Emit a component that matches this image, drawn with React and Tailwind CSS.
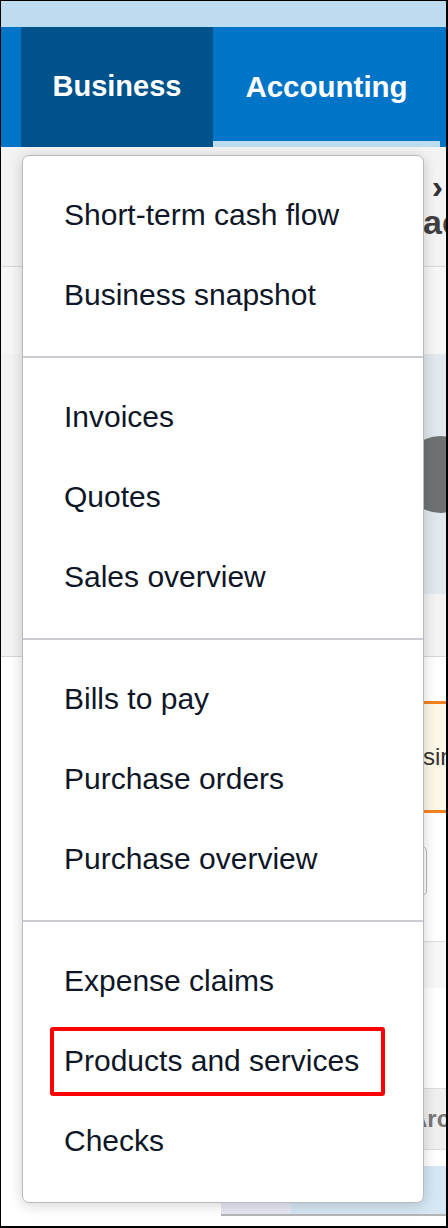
import React from 'react';

const sections = [
  ['Short-term cash flow', 'Business snapshot'],
  ['Invoices', 'Quotes', 'Sales overview'],
  ['Bills to pay', 'Purchase orders', 'Purchase overview'],
  ['Expense claims', 'Products and services', 'Checks'],
];

const MenuItem = ({ label, highlighted }) => (
  <div className="relative h-[80px] flex items-center pl-[41px] text-[30px] text-[#0e1627] whitespace-nowrap">
    {label}
    {highlighted && (
      <div className="absolute left-[27px] top-[7px] w-[335px] h-[69px] border-4 border-[#ff0000] rounded-[3px]" />
    )}
  </div>
);

const BusinessMenu = () => (
  <div className="absolute left-[21px] top-[154px] w-[402px] bg-white border-[1.5px] border-[#b9b9c1] rounded-[7px] shadow-[0_2px_14px_rgba(0,0,0,0.18)]">
    {sections.map((items, i) => (
      <div key={i} className={i > 0 ? 'border-t-2 border-[#cbcbd1]' : ''}>
        <div className="pt-[18px] pb-[22px]">
          {items.map((label) => (
            <MenuItem
              key={label}
              label={label}
              highlighted={label === 'Products and services'}
            />
          ))}
        </div>
      </div>
    ))}
  </div>
);

export default function App() {
  return (
    <div
      className="relative w-[448px] h-[1228px] overflow-hidden bg-white border-l border-t border-r-2 border-b-2 border-black"
      style={{ fontFamily: '"Liberation Sans", Arial, sans-serif' }}
    >
      {/* top strip + nav */}
      <div className="h-[26px] bg-[#bedcf0]" />
      <div className="h-[120px] bg-[#0075c8] flex pl-[20px] text-white font-bold text-[29px]">
        <div className="w-[192px] bg-[#00528b] flex items-center justify-center">
          Business
        </div>
        <div className="relative w-[227px] flex items-center justify-center text-[29.5px]">
          Accounting
          <div className="absolute left-0 right-0 bottom-0 h-[6px] bg-[#bedcf0]" />
        </div>
      </div>

      {/* page behind the menu */}
      <div className="bg-[#f3f3f3] border-b border-[#d6d6d6]">
        <div className="h-[120px] border-b border-[#d6d6d6] overflow-hidden">
          <div className="flex justify-end items-center h-[50px] pt-[28px] pr-[3px] text-[#333] leading-none">
            <span className="text-[18px] text-[#0075c8]">Dashboard</span>
            <span className="ml-[10px] text-[34px] font-bold">›</span>
          </div>
          <div className="pl-[422px] text-[34px] font-bold text-[#404040] whitespace-nowrap">
            account
          </div>
        </div>
        <div className="h-[87px] bg-[#f6f6f6]" />
        <div className="h-[240px] pl-[300px]">
          <div className="relative h-full bg-[#e1e8ed] overflow-hidden">
            <div className="absolute left-[101px] top-[82px] w-[77px] h-[77px] rounded-full bg-[#6e7273]" />
          </div>
        </div>
        <div className="h-[62px]" />
      </div>
      <div className="pl-[260px]">
        <div className="h-[44px]" />
        <div className="h-[112px] border-y-[3px] border-[#f58220] bg-[#fdf7e8] flex items-center overflow-hidden">
          <span className="pl-[162px] text-[24px] text-[#333] whitespace-nowrap">sing</span>
        </div>
        <div className="h-[33px]" />
        <div className="flex justify-end pr-[19px]">
          <div className="w-[120px] h-[50px] border border-[#bbbbbb] rounded-[5px] bg-white" />
        </div>
        <div className="h-[45px]" />
        <div className="h-[47px] border-t border-[#dddddd] bg-[#f7f7f7]" />
        <div className="h-[100px]" />
        <div className="h-[62px] border-y border-[#dcdcdc] bg-[#efefef] flex items-center overflow-hidden">
          <span className="pl-[149px] text-[24px] font-bold text-[#777] whitespace-nowrap">Archive</span>
        </div>
        <div className="h-[16px]" />
      </div>
      <div className="flex h-[50px] pl-[220px]">
        <div className="w-[70px] bg-[#e6e8f4] border-b-2 border-[#b5b5b5]" />
        <div className="flex-1 bg-[#d5e6f4] border-b-2 border-[#b5b5b5]" />
      </div>

      <BusinessMenu />
    </div>
  );
}
